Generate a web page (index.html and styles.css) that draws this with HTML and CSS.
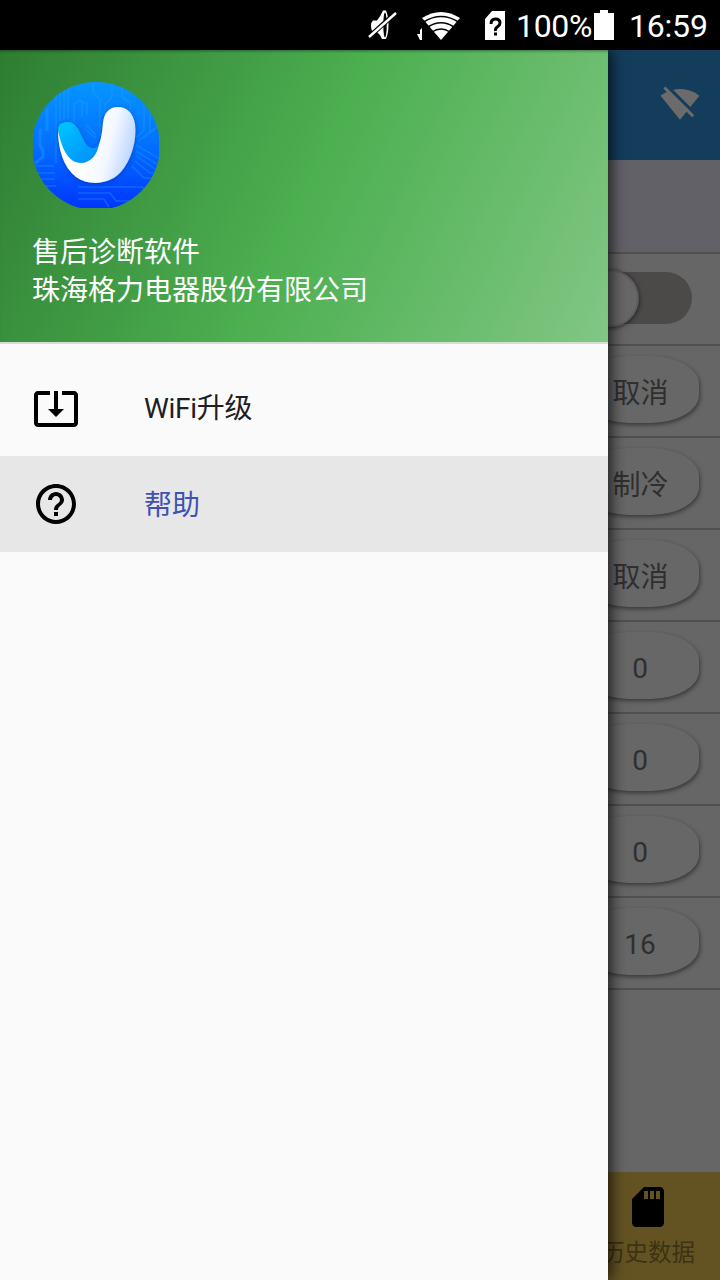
FILE: index.html
```html
<!DOCTYPE html>
<html lang="zh-CN">
<head>
<meta charset="utf-8">
<meta name="viewport" content="width=720">
<title>售后诊断软件</title>
<link rel="stylesheet" href="styles.css">
</head>
<body>
<div class="screen">
  <header class="status">
    <svg class="status-mute" width="30" height="32" viewBox="0 0 30 32" fill="#fff">
      <path d="M5 11.500h4q4-5 6-10h3q2.500 6 2.500 14.500T18 30h-4q-2-5-5-7H5q-2-2-2-6t2-5.500z"/>
      <ellipse cx="17" cy="16" rx="1.700" ry="12.500" fill="#000"/>
      <path d="M2 27L27 4.500" stroke="#000" stroke-width="4.800"/>
      <path d="M1 28L28 4" stroke="#fff" stroke-width="2.400"/>
    </svg>
    <svg class="status-wifi" width="44" height="32" viewBox="0 0 44 32">
      <path d="M5 8Q24-4 43 8L24 30z" fill="#fff"/>
      <path d="M6.500 12Q24 1 41.500 12M11 17Q24 8.500 37 17M15 22Q24 16 33 22" fill="none" stroke="#000" stroke-width="1.500"/>
      <path d="M5 18v12H3l-3-6h3v-4z" fill="#fff"/>
    </svg>
    <svg class="status-sim" width="20" height="30" viewBox="0 0 20 30">
      <path d="M7 0h13v29H0V8z" fill="#fff"/>
      <path d="M6 13q0-5 4.500-5t4.500 4q0 2-2.500 3.700T10.500 20" fill="none" stroke="#000" stroke-width="3"/>
      <path d="M9 21.500h3v3H9z"/>
    </svg>
    <span class="status-percent">100%</span>
    <svg class="status-battery" width="20" height="30" viewBox="0 0 20 30"><path d="M6 0h8v3h6v27H0V3h6z" fill="#fff"/></svg>
    <span class="status-time">16:59</span>
  </header>

  <div class="content">
    <main class="page">
      <div class="toolbar">
        <svg width="40" height="40" viewBox="0 0 24 24" fill="#6b6b6b"><path d="M23.640 7c-.45-.34-4.930-4-11.640-4-1.500 0-2.890.19-4.150.48L18.180 13.800 23.640 7zm-6.600 8.220L3.270 1.440 2 2.720l2.050 2.060C1.910 5.760.59 6.820.36 7l11.630 14.490.01.01.01-.01 3.900-4.860 3.320 3.320 1.270-1.270-3.460-3.460z"/></svg>
      </div>
      <div class="row section"></div>
      <div class="row"><div class="switch"><div class="thumb"></div></div></div>
      <div class="row"><div class="pill word">取消</div></div>
      <div class="row"><div class="pill word">制冷</div></div>
      <div class="row"><div class="pill word">取消</div></div>
      <div class="row"><div class="pill">0</div></div>
      <div class="row"><div class="pill">0</div></div>
      <div class="row"><div class="pill">0</div></div>
      <div class="row last"><div class="pill">16</div></div>
      <nav class="tabs">
        <div class="tab">
          <svg width="48" height="48" viewBox="0 0 24 24"><path d="M18 2h-8L4.020 8 4 20c0 1.100.9 2 2 2h12c1.100 0 2-.9 2-2V4c0-1.100-.9-2-2-2zm-6 6h-2V4h2v4zm3 0h-2V4h2v4zm3 0h-2V4h2v4z"/></svg>
          <span>历史数据</span>
        </div>
      </nav>
    </main>

    <aside class="drawer">
      <div class="drawer-head">
        <svg class="logo" width="128" height="128" viewBox="0 0 128 128">
          <defs>
            <linearGradient id="disc" x1="0" y1="0" x2="0" y2="1"><stop offset="0" stop-color="#0796ff"/><stop offset=".5" stop-color="#0270ff"/><stop offset="1" stop-color="#0035ff"/></linearGradient>
            <linearGradient id="swoosh" x1="50" y1="70" x2="105" y2="84" gradientUnits="userSpaceOnUse"><stop offset="0" stop-color="#fff"/><stop offset=".45" stop-color="#f4f8ff"/><stop offset="1" stop-color="#a9caff"/></linearGradient>
            <linearGradient id="fold" x1="28" y1="42" x2="62" y2="80" gradientUnits="userSpaceOnUse"><stop offset="0" stop-color="#00c4ff"/><stop offset="1" stop-color="#0090fb"/></linearGradient>
            <filter id="soft" x="-20%" y="-20%" width="140%" height="140%"><feDropShadow dx="0" dy="1" stdDeviation="2" flood-color="#002b9c" flood-opacity=".6"/></filter>
            <clipPath id="disc-edge"><circle cx="64" cy="65" r="64"/></clipPath>
            <clipPath id="disc-box"><path d="M1 1h126v126H1z"/></clipPath>
          </defs>
          <g clip-path="url(#disc-box)"><g clip-path="url(#disc-edge)">
            <path d="M0 0h128v128H0z" fill="url(#disc)"/>
            <g fill="none" stroke="#24a7ff" stroke-opacity=".35" stroke-width="1.500">
              <path d="M24 12v70M28 8v32M32 6v34M36 4v34M42 22v20M50 20v16M55 20v14M61 2v9l7 7v38M80 2v14l-7 7v30M90 2v14l8 5v20M112 25v24l-8 8M118 32v20"/>
              <path d="M15 28v22M8 48v16l3 6v6l-9 7" stroke-width="3"/>
              <path d="M43 23l5-4 6 4M54 44l10 10M54 49l10 8M106 60l22-16M104 64l24 14M104 70l24 15M104 75l22 15M103 80l15 12h8M100 85l12 12h14"/>
              <path d="M4 85h18M3 92h20M5 98h18M8 105h16M46 106h64l8 5M46 112h32l6 8h24M46 118h26l5 8"/>
            </g>
          </g></g>
          <g filter="url(#soft)">
            <path d="M26 49C26 67 31 86 44 96C56 105 76 104 88 92C100 79 105 58 103 43C101 31 94 26 86 26C77 26 72 32 71 42C70 55 68 62 65 68C57 84 38 85 26 49z" fill="url(#swoosh)"/>
            <path d="M26 49C26 43 30 41 36 41C49 41 50 66 60 67C64 67 66 66 67 62C66 74 58 82 49 82C36 82 29 66 26 49z" fill="url(#fold)"/>
          </g>
        </svg>
        <div class="app-name">售后诊断软件</div>
        <div class="company">珠海格力电器股份有限公司</div>
      </div>
      <nav class="menu">
        <div class="menu-item">
          <svg width="48" height="48" viewBox="0 0 24 24"><path d="M12 16.500l4-4h-3v-9h-2v9H8l4 4zm9-13h-6v1.990h6v14.030H3V5.490h6V3.500H3c-1.100 0-2 .9-2 2v14c0 1.100.9 2 2 2h18c1.100 0 2-.9 2-2v-14c0-1.100-.9-2-2-2z"/></svg>
          <span class="label-wifi">WiFi升级</span>
        </div>
        <div class="menu-item active">
          <svg width="48" height="48" viewBox="0 0 24 24"><path d="M11 18h2v-2h-2v2zm1-16C6.480 2 2 6.480 2 12s4.480 10 10 10 10-4.480 10-10S17.520 2 12 2zm0 18c-4.410 0-8-3.590-8-8s3.590-8 8-8 8 3.590 8 8-3.590 8-8 8zm0-14c-2.210 0-4 1.790-4 4h2c0-1.100.9-2 2-2s2 .9 2 2c0 2-3 1.750-3 5h2c0-2.250 3-2.500 3-5 0-2.210-1.790-4-4-4z"/></svg>
          <span>帮助</span>
        </div>
      </nav>
    </aside>
  </div>
</div>
</body>
</html>
```

FILE: styles.css
```css
* { box-sizing: border-box; }
body { margin: 0; font-family: Roboto, "Noto Sans CJK SC", sans-serif; }
.screen { width: 720px; height: 1280px; display: flex; flex-direction: column; overflow: hidden; }

.status { height: 50px; flex: none; display: flex; align-items: flex-start; padding-right: 12px; justify-content: flex-end; background: #000; color: #fff; font-size: 32px; line-height: 52px; }
.status svg { flex: none; }
.status-mute { margin: 9px 19px 0 0; }
.status-wifi { margin: 10px 24px 0 0; }
.status-sim { margin: 11px 11px 0 0; }
.status-percent { width: 78px; white-space: nowrap; letter-spacing: -.3px; }
.status-battery { margin: 10px 15px 0 0; }
.status-time { width: 79px; white-space: nowrap; letter-spacing: -.2px; }

.content { position: relative; flex: 1; display: flex; overflow: hidden; }
.page { flex: 1; display: flex; flex-direction: column; background: #666; color: #2f2f2f; }
.toolbar { height: 110px; display: flex; justify-content: flex-end; align-items: center; padding: 0 20px 2px 0; background: #143d5c; }
.row { height: 92px; display: flex; align-items: center; justify-content: flex-end; padding-right: 20px; border-top: 2px solid #505050; }
.row.section { border-top: 0; background: #626168; }
.row.last { height: 94px; border-bottom: 2px solid #505050; }
.pill { width: 118px; height: 67px; margin: 0 1px 4px 0; padding-top: 8px; display: flex; align-items: center; justify-content: center; border-radius: 48px / 28px; background: #676767; box-shadow: 1px 2px 4px rgba(0, 0, 0, .45); font-size: 28px; line-height: 40px; }
.pill.word { padding-top: 10px; padding-left: 1px; }
.switch { width: 110px; height: 52px; margin: 0 8px 2px 0; display: flex; align-items: center; border-radius: 26px; background: #4c4949; }
.thumb { width: 57px; height: 57px; flex: none; border-radius: 50%; background: #676767; border: 2px solid #5d5d5d; box-shadow: 0 1px 5px rgba(0, 0, 0, .65); }
.tabs { height: 108px; margin-top: auto; display: flex; justify-content: flex-end; background: #645322; }
.tab { width: 144px; padding-top: 11px; display: flex; flex-direction: column; align-items: center; gap: 3px; color: #3c3214; font-size: 23.5px; line-height: 38px; }

.drawer { position: absolute; inset: 0 auto 0 0; width: 608px; background: #fafafa; box-shadow: 3px 0 14px rgba(0, 0, 0, .75); }
.drawer-head { height: 294px; padding: 31px 32px 0; border-bottom: 2px solid #d5ddd5; background: linear-gradient(115.600deg, #2e7d32 0%, #4caf50 50%, #81c784 100%); box-shadow: inset 0 3px 3px -2px rgba(0, 0, 0, .4); color: #fff; font-size: 28px; line-height: 38px; }
.logo { display: block; margin-bottom: 25px; }
.app-name, .company { white-space: nowrap; }
.menu { padding-top: 16px; }
.menu-item { height: 96px; display: flex; align-items: center; gap: 64px; padding-left: 32px; color: #202020; font-size: 28px; line-height: 40px; }
.menu-item span { padding-top: 4px; }
.menu-item .label-wifi { padding-top: 2px; letter-spacing: -.3px; }
.menu-item.active { background: #e7e7e7; color: #3f51b5; }
```
